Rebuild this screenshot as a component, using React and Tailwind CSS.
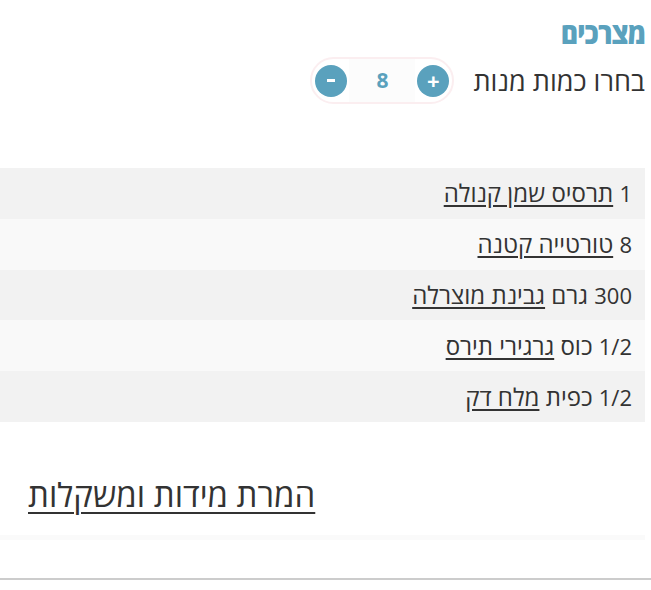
export default function App() {
  const items = [
    { qty: "1", unit: "", name: "תרסיס שמן קנולה" },
    { qty: "8", unit: "", name: "טורטייה קטנה" },
    { qty: "300", unit: "גרם", name: "גבינת מוצרלה" },
    { qty: "1/2", unit: "כוס", name: "גרגירי תירס" },
    { qty: "1/2", unit: "כפית", name: "מלח דק" },
  ]

  return (
    <div
      dir="rtl"
      className="min-h-[590px] w-[651px] bg-white text-[#333]"
      style={{ fontFamily: '"Open Sans", "DejaVu Sans", sans-serif' }}
    >
      <div className="mr-[6px] w-[645px]">
        {/* Header */}
        <div className="pt-[14px]">
          <h2 className="origin-right text-[30px] font-extrabold leading-[38px] tracking-[-1px] text-[#5aa1bd] [transform:scaleX(0.88)]">
            מצרכים
          </h2>
          <div className="mt-[5px] flex items-center gap-[19px]">
            <span className="text-[27px] leading-[34px]">בחרו כמות מנות</span>
            <div className="flex h-[47px] w-[144px] items-center justify-between rounded-full border-2 border-[#fbeef0] px-[3px]">
              <button className="flex h-[32px] w-[32px] items-center justify-center rounded-full bg-[#5aa1bd] text-[22px] font-bold leading-none text-white">
                <span className="-mt-[2px]">+</span>
              </button>
              <div className="flex h-[43px] w-[66px] items-center justify-center bg-[#fcfcfc] text-[21px] font-bold text-[#5aa1bd]">
                8
              </div>
              <button className="flex h-[32px] w-[32px] items-center justify-center rounded-full bg-[#5aa1bd]">
                <span className="h-[3px] w-[8px] bg-white" />
              </button>
            </div>
          </div>
        </div>

        {/* Ingredients */}
        <ul className="mt-[64px]">
          {items.map((item, i) => (
            <li
              key={i}
              className={`flex h-[50.8px] items-center pr-[13px] ${
                i % 2 === 0 ? "bg-[#f2f2f2]" : "bg-[#f9f9f9]"
              }`}
            >
              <p className="text-[24px] leading-[30px]">
                <span className="text-[22px]">{item.qty}</span>
                {item.unit && <span> {item.unit}</span>}{" "}
                <a href="#" className="underline underline-offset-[3px]">
                  {item.name}
                </a>
              </p>
            </li>
          ))}
        </ul>

        {/* Conversion link */}
        <div className="flex h-[113px] items-start justify-end pl-[28px] pt-[53px]">
          <a href="#" className="text-[33px] leading-[40px] underline decoration-2 underline-offset-[5px]">
            המרת מידות ומשקלות
          </a>
        </div>
        <div className="h-[5px] bg-[#fafafa]" />
      </div>
      <div className="mt-[38px] h-[2px] w-[651px] bg-[#cccccc]" />
    </div>
  )
}
